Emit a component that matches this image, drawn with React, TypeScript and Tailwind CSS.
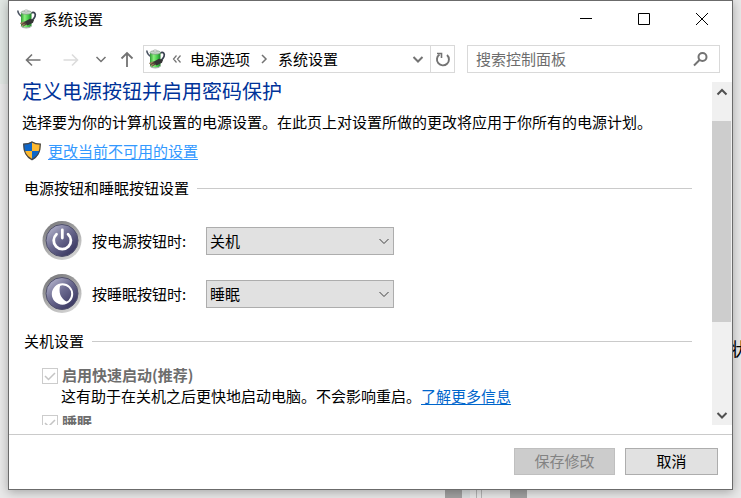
import type { ReactNode } from "react";

function KettleIcon() {
  return (
    <svg width="20" height="20" viewBox="0 0 20 20" className="shrink-0" aria-hidden="true">
      <defs>
        <linearGradient id="battery" x1="0" x2="1">
          <stop offset="0" stopColor="#2f9a35" />
          <stop offset=".35" stopColor="#8af07c" />
          <stop offset=".7" stopColor="#45c84a" />
          <stop offset="1" stopColor="#1f7d28" />
        </linearGradient>
      </defs>
      <path d="M.8 1.500c.2 3 1.500 4.500 4 6" fill="none" stroke="#4c5563" strokeWidth="1.600" />
      <path d="M14 4c3.500-1.500 5 .5 4 3.500-.7 2-2 3-3.500 4.500" fill="none" stroke="#38404f" strokeWidth="1.700" />
      <path d="M4 3.500v13.500c2 2.500 8.500 2.500 10.500 0V3.500z" fill="url(#battery)" />
      <ellipse cx="9.250" cy="3.500" rx="5.250" ry="1.800" fill="#c9d6cb" stroke="#6e8a72" strokeWidth=".6" />
      <rect x="7.500" y=".8" width="3.500" height="2.200" rx="1" fill="#d8dcd9" stroke="#8a958c" strokeWidth=".4" />
      <path d="M4 17c2 2.600 8.500 2.600 10.500 0" fill="none" stroke="#a8b5aa" strokeWidth="1.200" />
      <path d="M7 13l6-3.200 4 1.200-1 2.800-5.500 2.700z" fill="#343434" />
      <path d="M3 14l4.500-1.500 2.500 3L6 17.500z" fill="#59493a" />
      <path d="M3.500 14.500l3-1M5 16.500l2.500-1" stroke="#c9ad78" strokeWidth=".8" />
    </svg>
  );
}

function ShieldIcon() {
  return (
    <svg width="20" height="20" viewBox="0 0 20 20" className="shrink-0" aria-hidden="true">
      <clipPath id="shield">
        <path d="M10 .5c2.500 1.700 5 2.200 8.500 2.200 0 7.500-1.500 12.800-8.500 16.300-7-3.500-8.500-8.800-8.500-16.300 3.500 0 6-.5 8.500-2.200z" />
      </clipPath>
      <g clipPath="url(#shield)">
        <path d="M0 0h10v10H0zM10 10h10v10H10z" fill="#0d66c9" />
        <path d="M10 0h10v10H10zM0 10h10v10H0z" fill="#fdb930" />
      </g>
      <path
        d="M10 1c2.500 1.700 5 2.200 8.300 2.200 0 7-1.500 12-8.300 15.500-6.800-3.500-8.300-8.500-8.300-15.500 3.300 0 5.800-.5 8.300-2.200z"
        fill="none"
        stroke="#484848"
        strokeWidth="1.300"
      />
    </svg>
  );
}

function RoundIcon({ kind }: { kind: "power" | "sleep" }) {
  return (
    <svg width="40" height="40" viewBox="0 0 40 40" className="shrink-0" aria-hidden="true">
      <defs>
        <linearGradient id={`rim-${kind}`} x1=".2" y1="0" x2=".8" y2="1">
          <stop offset="0" stopColor="#77777a" />
          <stop offset=".5" stopColor="#a9a9a9" />
          <stop offset="1" stopColor="#d9d9d9" />
        </linearGradient>
        <linearGradient id={`face-${kind}`} x1=".1" y1=".1" x2=".75" y2=".85">
          <stop offset="0" stopColor="#b2b2cb" />
          <stop offset=".5" stopColor="#6c6b90" />
          <stop offset="1" stopColor="#413f68" />
        </linearGradient>
      </defs>
      <circle cx="20" cy="19.500" r="19.500" fill={`url(#rim-${kind})`} />
      <circle cx="20" cy="19.500" r="16" fill={`url(#face-${kind})`} stroke="#50506c" strokeWidth="1" />
      {kind === "power" ? (
        <g fill="none" stroke="#fff" strokeWidth="2.800" strokeLinecap="round">
          <path d="M14.500 13.200a8.600 8.600 0 1 0 11.600 0" />
          <path d="M20.300 9v8" />
        </g>
      ) : (
        <g>
          <circle cx="20.500" cy="20" r="9.700" fill="none" stroke="#fff" strokeWidth="2" />
          <path d="M18.500 10.500c-11 2-10.500 18 1 19.500 2.500 0 4.500-.7 6-2-7-3-9.500-10-7-17.500z" fill="#fff" />
        </g>
      )}
    </svg>
  );
}

function Chevron({ dir, className }: { dir: "up" | "down" | "right"; className: string }) {
  const d = { up: "M1.500 8.500L6 4l4.500 4.500", down: "M1.500 4L6 8.500 10.500 4", right: "M4 2l4 4-4 4" }[dir];
  return (
    <svg width="12" height="12" viewBox="0 0 12 12" className={className} fill="none" stroke="currentColor" aria-hidden="true">
      <path d={d} />
    </svg>
  );
}

function IconButton({ label, className, children }: { label: string; className: string; children: ReactNode }) {
  return (
    <button type="button" aria-label={label} className={`flex items-center justify-center ${className}`}>
      {children}
    </button>
  );
}

function SectionTitle({ children }: { children: ReactNode }) {
  return (
    <div className="flex h-5 items-center gap-2 pl-0.5">
      <h2 className="shrink-0">{children}</h2>
      <div className="h-px flex-1 bg-[#cacaca]" />
    </div>
  );
}

function ActionRow({ id, kind, label, options }: { id: string; kind: "power" | "sleep"; label: string; options: string[] }) {
  return (
    <div className="flex h-10 items-center pl-5">
      <RoundIcon kind={kind} />
      <label htmlFor={id} className="w-[124px] pl-2.5">
        {label}
      </label>
      <div className="relative">
        <select
          id={id}
          className="block h-7 w-[188px] appearance-none border border-[#adadad] bg-[#e1e1e1] pl-[3px] text-black"
        >
          {options.map((o) => (
            <option key={o}>{o}</option>
          ))}
        </select>
        <Chevron dir="down" className="pointer-events-none absolute top-2 right-1 text-[#404040]" />
      </div>
    </div>
  );
}

function DisabledCheck({ id, label }: { id: string; label: string }) {
  return (
    <div className="flex h-5 items-center gap-1 pl-5">
      <div className="relative mt-0.5 size-4">
        <input id={id} type="checkbox" defaultChecked disabled className="block size-4 appearance-none border border-[#cccccc] bg-white" />
        <svg viewBox="0 0 16 16" className="pointer-events-none absolute inset-0 size-4" fill="none" stroke="#c4c4c4" strokeWidth="1.500" aria-hidden="true">
          <path d="M3 8l3.500 3.500L13 5" />
        </svg>
      </div>
      <label htmlFor={id} className="font-bold text-[#6d6d6d]">
        {label}
      </label>
    </div>
  );
}

export default function App() {
  return (
    <div className="relative flex h-screen overflow-hidden bg-[#e9e9e9] px-2 pb-2 font-['Noto_Sans_CJK_SC',sans-serif] text-[15px] leading-5 text-black">
      <div className="absolute top-0 left-0 h-[84px] w-2 bg-[#e1e7e3]" />
      <div className="absolute bottom-0 left-[445px] flex h-3">
        <div className="w-[17px] bg-[#a3a3a3]" />
        <div className="w-2 bg-[#dce0e1]" />
        <div className="ml-1.5 w-1.5 border-x border-[#b5b5b5]" />
        <div className="ml-7 w-[17px] bg-[#a3a3a3]" />
      </div>
      <div className="absolute top-[338px] left-[730px] text-[18px] leading-5">状</div>

      <main className="relative flex min-w-0 flex-1 flex-col border border-[#6b6b6b] bg-white shadow-[0_2px_10px_rgba(0,0,0,0.3)]">
        <header className="flex h-9 shrink-0 items-center pr-px">
          <div className="flex flex-1 items-center gap-1.5 pl-2">
            <KettleIcon />
            <h1>系统设置</h1>
          </div>
          <IconButton label="最小化" className="h-9 w-[58px]">
            <svg width="12" height="12" stroke="#000" aria-hidden="true"><path d="M0 5.500h12" /></svg>
          </IconButton>
          <IconButton label="最大化" className="h-9 w-[58px]">
            <svg width="12" height="12" stroke="#000" fill="none" aria-hidden="true"><path d="M.5 .5h11v11H.5z" /></svg>
          </IconButton>
          <IconButton label="关闭" className="h-9 w-[58px]">
            <svg width="12" height="12" stroke="#000" aria-hidden="true"><path d="M0 0l12 12M12 0L0 12" /></svg>
          </IconButton>
        </header>

        <nav className="mt-2 flex h-7 shrink-0 items-center pr-3">
          <IconButton label="后退" className="ml-3 w-6">
            <svg width="16" height="16" fill="none" stroke="#737373" strokeWidth="1.600" aria-hidden="true"><path d="M15.500 9H1.500M7 3.500L1.500 9 7 14.500" /></svg>
          </IconButton>
          <IconButton label="前进" className="ml-3.5 w-6">
            <svg width="16" height="16" fill="none" stroke="#dcdcdc" strokeWidth="1.600" aria-hidden="true"><path d="M.5 9h14M9 3.500L14.500 9 9 14.500" /></svg>
          </IconButton>
          <IconButton label="最近的位置" className="ml-3 w-3">
            <Chevron dir="down" className="stroke-[1.5] text-[#737373]" />
          </IconButton>
          <IconButton label="上移" className="ml-2 w-6">
            <svg width="16" height="16" fill="none" stroke="#737373" strokeWidth="1.800" aria-hidden="true"><path d="M8 16V2M2.500 7.500L8 2l5.500 5.500" /></svg>
          </IconButton>
          <div className="ml-1 flex h-7 min-w-0 flex-1 items-center border border-[#d9d9d9] pl-0.5">
            <KettleIcon />
            <svg width="10" height="10" className="ml-1.5 shrink-0" fill="none" stroke="#737373" strokeWidth="1.200" aria-hidden="true">
              <path d="M4.500 1.500L1.500 5l3 3.500M8.500 1.500L5.500 5l3 3.500" />
            </svg>
            <button type="button" className="ml-2 shrink-0">电源选项</button>
            <Chevron dir="right" className="mx-2 shrink-0 stroke-[1.5] text-[#737373]" />
            <button type="button" className="shrink-0">系统设置</button>
            <IconButton label="以前的位置" className="ml-auto h-full w-6">
              <Chevron dir="down" className="stroke-2 text-[#737373]" />
            </IconButton>
            <IconButton label="刷新" className="h-full w-6 border-l border-[#d9d9d9]">
              <svg width="16" height="16" fill="none" stroke="#737373" strokeWidth="1.900" aria-hidden="true">
                <path d="M4.500 3.500a6 6 0 1 0 7.500.5" />
                <path d="M2 2.500h4.500v4.500" strokeWidth="1.600" />
              </svg>
            </IconButton>
          </div>
          <div className="ml-3 flex h-7 w-[253px] min-w-0 items-center border border-[#d9d9d9] pr-2.5 pl-2">
            <input
              type="text"
              aria-label="搜索控制面板"
              placeholder="搜索控制面板"
              className="min-w-0 flex-1 outline-none placeholder:text-[#6d6d6d]"
            />
            <svg width="16" height="16" fill="none" stroke="#737373" strokeWidth="2" aria-hidden="true">
              <circle cx="9.500" cy="6" r="4" />
              <path d="M6.500 9L1 14.500" />
            </svg>
          </div>
        </nav>

        <div className="mt-2 flex min-h-0 flex-1 pt-px">
          <div className="min-w-0 flex-1 overflow-hidden pr-5 pl-[13px]">
            <h1 className="text-[20px] leading-[18px] text-[#003399]">定义电源按钮并启用密码保护</h1>
            <p className="mt-3">选择要为你的计算机设置的电源设置。在此页上对设置所做的更改将应用于你所有的电源计划。</p>
            <div className="mt-[9px] mb-[17px] flex items-center gap-1.5">
              <ShieldIcon />
              <a href="#change" className="text-[#3399ff] underline underline-offset-2">更改当前不可用的设置</a>
            </div>
            <SectionTitle>电源按钮和睡眠按钮设置</SectionTitle>
            <div className="mt-[23px] mb-[17px] flex flex-col gap-[13px]">
              <ActionRow id="power" kind="power" label="按电源按钮时:" options={["关机", "睡眠", "不采取任何操作"]} />
              <ActionRow id="sleep" kind="sleep" label="按睡眠按钮时:" options={["睡眠", "关机", "不采取任何操作"]} />
            </div>
            <SectionTitle>关机设置</SectionTitle>
            <div className="mt-3.5">
              <DisabledCheck id="fast" label="启用快速启动(推荐)" />
              <p className="mt-px mb-1.5 pl-[39px]">
                这有助于在关机之后更快地启动电脑。不会影响重启。
                <a href="#more" className="text-[#0066cc] underline underline-offset-2">了解更多信息</a>
              </p>
              <DisabledCheck id="hibernate" label="睡眠" />
            </div>
          </div>
          <div className="flex w-5 flex-col bg-[#f0f0f0]" aria-hidden="true">
            <div className="flex h-5 items-center justify-center">
              <Chevron dir="up" className="stroke-2 text-[#505050]" />
            </div>
            <div className="mt-[19px] mr-px h-[201px] bg-[#cdcdcd]" />
            <div className="mt-auto flex h-5 items-center justify-center">
              <Chevron dir="down" className="stroke-2 text-[#505050]" />
            </div>
          </div>
        </div>

        <footer className="mt-[9px] flex h-[55px] shrink-0 items-center justify-end gap-2.5 border-t border-[#cacaca] pr-3.5 pb-0.5">
          <button type="button" disabled className="h-[27px] w-[101px] border border-[#bfbfbf] bg-[#cccccc] text-[#838383]">保存修改</button>
          <button type="button" className="h-[27px] w-[93px] border border-[#adadad] bg-[#e1e1e1]">取消</button>
        </footer>
      </main>
    </div>
  );
}
